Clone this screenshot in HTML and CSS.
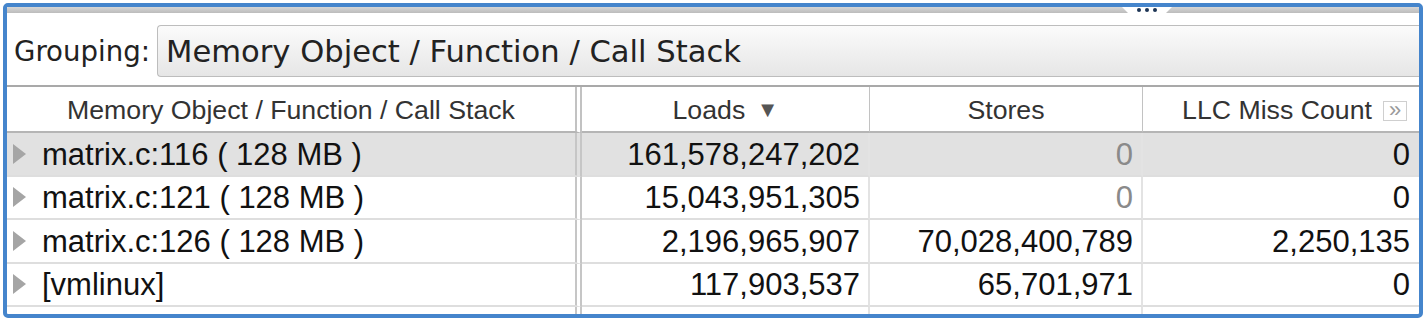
FILE: index.html
```html
<!DOCTYPE html>
<html>
<head>
	<meta charset="utf-8">
	<title>Memory Access</title>
	<link rel="stylesheet" href="styles.css">
</head>
<body>
	<div class="frame">
		<div class="strip"><span class="grip"><i></i><i></i><i></i></span></div>
		<div class="grouping">
			<label>Grouping:</label>
			<div class="combo">Memory Object / Function / Call Stack</div>
		</div>
		<table class="grid">
			<thead>
				<tr>
					<th class="c1">Memory Object / Function / Call Stack</th>
					<th class="c2">Loads <span class="sort">&#9660;</span></th>
					<th class="c3">Stores</th>
					<th class="c4"><div class="hlast"><span class="htxt">LLC Miss Count</span><span class="more">&raquo;</span></div></th>
				</tr>
			</thead>
			<tbody>
				<tr class="sel">
					<td class="name"><span class="tri"></span>matrix.c:116 ( 128 MB )</td>
					<td>161,578,247,202</td>
					<td class="zero">0</td>
					<td>0</td>
				</tr>
				<tr>
					<td class="name"><span class="tri"></span>matrix.c:121 ( 128 MB )</td>
					<td>15,043,951,305</td>
					<td class="zero">0</td>
					<td>0</td>
				</tr>
				<tr>
					<td class="name"><span class="tri"></span>matrix.c:126 ( 128 MB )</td>
					<td>2,196,965,907</td>
					<td>70,028,400,789</td>
					<td>2,250,135</td>
				</tr>
				<tr>
					<td class="name"><span class="tri"></span>[vmlinux]</td>
					<td>117,903,537</td>
					<td>65,701,971</td>
					<td>0</td>
				</tr>
				<tr>
					<td class="name"></td>
					<td></td>
					<td></td>
					<td></td>
				</tr>
			</tbody>
		</table>
	</div>
</body>
</html>
```

FILE: styles.css
```css
*{margin: 0;padding: 0;box-sizing: border-box;}
body{background: #fff;font-family: "Liberation Sans", Arial, sans-serif;}
.frame{margin: 3px;height: 315px;border: 4px solid #4585cc;border-radius: 5px;overflow: hidden;background: #fff;}

/* top strip with the little grip tab */
.strip{height: 6px;background: linear-gradient(#d6d6d6, #bcbcbc);position: relative;}
.grip{position: absolute;left: 1115px;top: 0;width: 50px;height: 8px;background: #fff;clip-path: polygon(0 0, 100% 0, 84% 100%, 16% 100%);display: flex;justify-content: center;gap: 4px;padding-top: 1px;}
.grip i{width: 4px;height: 4px;border-radius: 50%;background: #1d3555;}

.grouping{height: 74px;padding-top: 12px;display: flex;align-items: flex-start;border-bottom: 2px solid #a9a9a9;}
.grouping label{font-family: "DejaVu Sans", sans-serif;font-size: 27.6px;color: #222;line-height: 54px;padding-left: 7px;width: 150px;}
.combo{flex: 1;height: 52px;border: 1px solid #bdbdbd;border-right: none;border-radius: 4px 0 0 4px;background: linear-gradient(#fbfbfb, #e6e6e6);font-family: "DejaVu Sans", sans-serif;font-size: 30.6px;line-height: 51px;color: #222;padding-left: 8px;}

.grid{width: 1412px;border-collapse: separate;border-spacing: 0;table-layout: fixed;}
.grid th{height: 46px;padding-top: 3px;font-size: 26.7px;font-weight: normal;color: #333;text-align: center;border-bottom: 2px solid #b5b5b5;border-right: 1px solid #c2c2c2;white-space: nowrap;}
.grid .c1{width: 575px;border-right: 7px double #c2c2c2;}
.grid .c2{width: 288px;}
.grid .c3{width: 273px;}
.grid .c4{width: 276px;border-right: none;}
.sort{font-size: 22px;color: #555;margin-left: 4px;vertical-align: 2px;}
.hlast{display: flex;align-items: center;padding-left: 28px;padding-right: 12px;}
.htxt{flex: 1;text-align: center;}
.more{width: 24px;height: 20px;border: 1px solid #cfcfcf;font-size: 22px;line-height: 15px;color: #9a9a9a;text-align: center;}

.grid td{height: 43.5px;font-size: 31px;color: #111;text-align: right;padding-right: 8px;padding-top: 2px;border-bottom: 2px solid #dedede;border-right: 2px solid #e3e3e3;white-space: nowrap;}
.grid td:last-child{border-right: none;padding-right: 9px;}
.grid td.name{text-align: left;padding-left: 6px;border-right: 7px double #c6c6c6;}
.grid td.zero{color: #8a8a8a;}
.grid .sel td{background: #e1e1e1;}
.tri{display: inline-block;width: 0;height: 0;border-left: 13px solid #a5a5a5;border-top: 10px solid transparent;border-bottom: 10px solid transparent;margin-right: 16px;vertical-align: 1px;}
```
